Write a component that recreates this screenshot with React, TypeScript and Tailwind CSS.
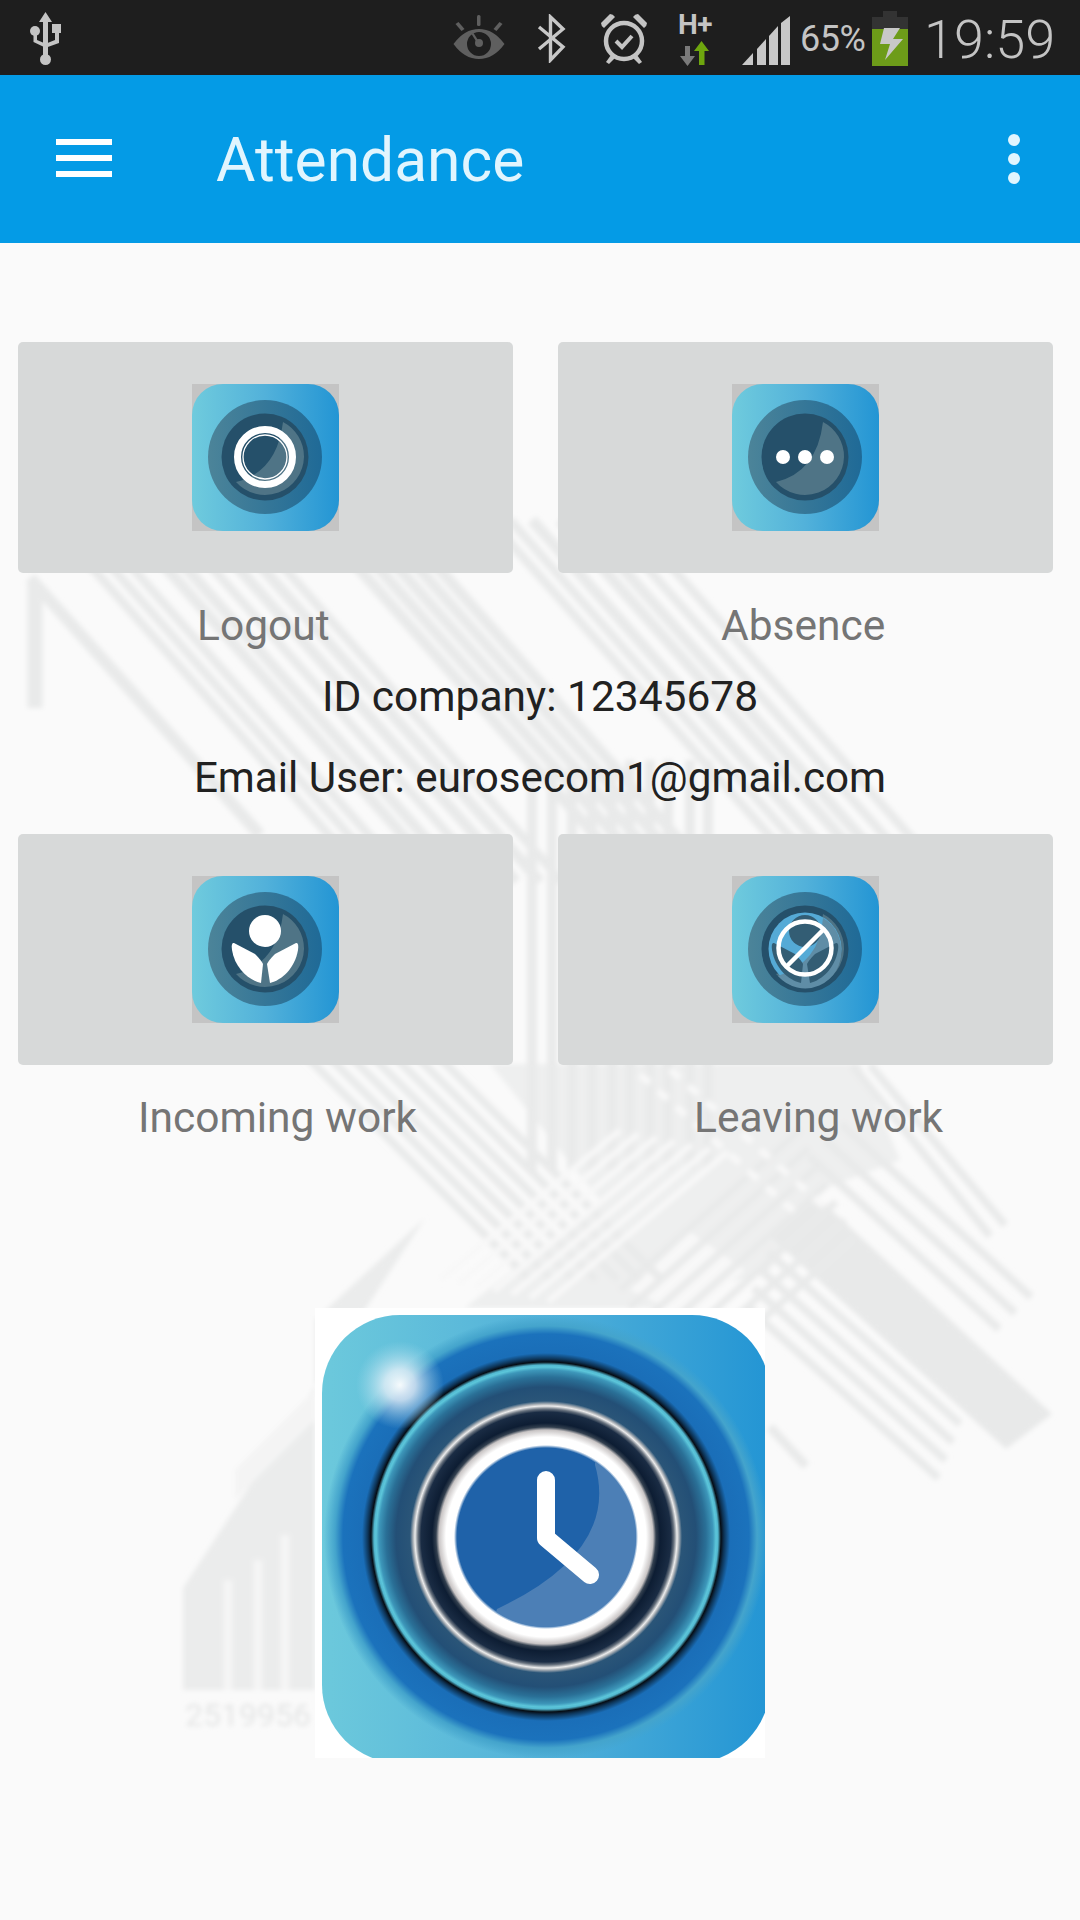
import React from "react";

const diag = (x: number, y: number, len: number, w: number, k = 1.13) => (
  <line x1={x} y1={y} x2={x + len} y2={y + len * k} strokeWidth={w} />
);

function Watermark() {
  const topLeft = [30, 50, 70, 104, 124, 150, 176, 200, 222, 296, 316, 336, 356, 376, 470, 490, 512, 540, 560, 585, 610];
  const crossA = [300, 322, 344, 366, 388, 410, 432];
  const vertical = [532, 552, 572, 592, 612, 630, 650, 668, 690, 708];
  const rise = [0, 18, 36, 54, 72, 90, 108];
  const thinA = [0, 16, 32];
  const thinB = [0, 18, 36, 54];
  const dots = [0, 1, 2, 3, 4, 5, 6, 7, 8];
  return (
    <svg className="absolute left-0 top-0 w-[1080px] h-[1920px]" viewBox="0 0 1080 1920" fill="none">
      <defs>
        <filter id="wmblur" x="-5%" y="-5%" width="110%" height="110%">
          <feGaussianBlur stdDeviation="2.6" />
        </filter>
      </defs>
      <g filter="url(#wmblur)">
        <polygon points="490,1064 860,1064 900,1160 813,1193 770,1270 650,1308 465,1308 600,1200" fill="#eeefef" />
        <polygon points="813,1193 1052,1414 1006,1449 768,1235" fill="#e8e9e9" />
        <polygon points="425,1218 315,1320 315,1690 183,1690 183,1588" fill="#ebecec" />
        <polygon points="630,1290 690,1232 745,1270 690,1318" fill="#f8f8f8" />
        <g stroke="#e9eaea">
          <path d="M35 708V585" strokeWidth="15" />
          <path d="M30 578L260 835" strokeWidth="12" />
          {topLeft.map((x) => (
            <g key={x}>{diag(x + 20, 520, 320, x % 4 === 0 ? 11 : 9)}</g>
          ))}
          {crossA.map((x) => (
            <g key={x}>{diag(x, 1050, 230, 8, 1)}</g>
          ))}
          {vertical.map((x) => (
            <line key={x} x1={x} y1={760} x2={x} y2={1170} strokeWidth="10" />
          ))}
          {rise.map((d) => (
            <line key={"r" + d} x1={800 + d * 0.5} y1={1130 + d} x2={620 + d * 0.5} y2={1290 + d} strokeWidth="7" />
          ))}
          {thinA.map((d) => (
            <line key={"t" + d} x1={841 - d} y1={1124 + d} x2={1031 - d} y2={1297 + d} strokeWidth="8" />
          ))}
          {thinB.map((d) => (
            <line key={"u" + d} x1={768 - d * 0.4} y1={1252 + d} x2={960 - d * 0.4} y2={1424 + d} strokeWidth="8" />
          ))}
          <line x1="852" y1="1065" x2="990" y2="1236" strokeWidth="8" />
          <line x1="870" y1="1065" x2="1005" y2="1225" strokeWidth="8" />
          <line x1="770" y1="1427" x2="806" y2="1466" strokeWidth="9" />
        </g>
        <g stroke="#f8f8f8" strokeWidth="6">
          {rise.map((d) => (
            <line key={"w" + d} x1={620 + d} y1={1130 + d * 0.2} x2={440 + d} y2={1280 + d * 0.2} />
          ))}
          {dots.map((i) => (
            <line key={"d" + i} x1={640 + i * 18} y1={1075 + i * 16} x2={650 + i * 18} y2={1083 + i * 16} strokeWidth="7" />
          ))}
          {dots.map((i) => (
            <line key={"e" + i} x1={670 + i * 18} y1={1070 + i * 16} x2={680 + i * 18} y2={1078 + i * 16} strokeWidth="7" />
          ))}
        </g>
        <g stroke="#f5f5f5" strokeWidth="9">
          <line x1="228" y1="1580" x2="228" y2="1690" />
          <line x1="258" y1="1560" x2="258" y2="1690" />
          <line x1="285" y1="1535" x2="285" y2="1690" />
        </g>
        <polygon points="235,1500 315,1420 315,1390 235,1470" fill="#f4f4f4" />
        <text x="185" y="1726" fill="#e4e5e5" fontSize="32" fontFamily="Roboto, sans-serif">2519956</text>
      </g>
    </svg>
  );
}

function SmallIcon({ id, children }: { id: string; children?: React.ReactNode }) {
  return (
    <svg viewBox="0 0 147 147" className="w-[147px] h-[147px] block">
      <defs>
        <linearGradient id={id + "bg"} x1="0" x2="1" y1="0" y2="0">
          <stop offset="0" stopColor="#6fcbdd" />
          <stop offset="0.5" stopColor="#52b1da" />
          <stop offset="1" stopColor="#2395d4" />
        </linearGradient>
        <linearGradient id={id + "ring"} x1="0" x2="1" y1="0" y2="0">
          <stop offset="0" stopColor="#4c8499" />
          <stop offset="1" stopColor="#1f6a97" />
        </linearGradient>
      </defs>
      <rect width="147" height="147" fill="#c4c4c4" />
      <rect width="147" height="147" rx="31" fill={`url(#${id}bg)`} />
      <circle cx="73" cy="73" r="57" fill={`url(#${id}ring)`} />
      <circle cx="73" cy="73" r="43.5" fill="#25506a" />
      <path d="M91 38Q85 88 44 98A39 39 0 0 0 112 73A39 39 0 0 0 91 38Z" fill="#4f7486" />
      {children}
    </svg>
  );
}

const Logout = () => (
  <SmallIcon id="i1">
    <circle cx="73" cy="73" r="27.5" fill="none" stroke="#fff" strokeWidth="7" />
    <circle cx="73" cy="73" r="22" fill="none" stroke="#fff" strokeWidth="1.3" />
  </SmallIcon>
);

const Absence = () => (
  <SmallIcon id="i2">
    <circle cx="51" cy="73" r="7" fill="#fff" />
    <circle cx="73" cy="73" r="7" fill="#fff" />
    <circle cx="95" cy="73" r="7" fill="#fff" />
  </SmallIcon>
);

const personParts = (fill: string) => (
  <>
    <circle cx="73" cy="55" r="16" fill={fill} />
    <path d="M42 67Q39 66 40 74C43 92 56 104 69 107L71 88Q69 84 63 78Z" fill={fill} />
    <path d="M104 67Q107 66 106 74C103 92 90 104 78 107L75 88Q77 84 83 78Z" fill={fill} />
  </>
);

const Incoming = () => <SmallIcon id="i3">{personParts("#fff")}</SmallIcon>;

const Leaving = () => (
  <SmallIcon id="i4">
    <circle cx="73" cy="73" r="36.5" fill="#55aad6" />
    <path d="M91 42Q88 86 46 100A36 36 0 0 0 109 73A36 36 0 0 0 91 42Z" fill="#5f8da6" />
    {personParts("#335d74")}
    <circle cx="73" cy="72" r="26.5" fill="none" stroke="#fff" strokeWidth="4.5" />
    <line x1="92" y1="53" x2="54" y2="91" stroke="#fff" strokeWidth="4.5" />
  </SmallIcon>
);

function BigLogo() {
  return (
    <div className="w-[450px] h-[450px] ml-[315px] mt-[165px] bg-white overflow-hidden">
      <svg viewBox="315 1308 450 450" className="w-[450px] h-[450px] block">
        <defs>
          <linearGradient id="bigbg" x1="0" x2="1" y1="0" y2="0">
            <stop offset="0" stopColor="#6cc9dc" />
            <stop offset="0.5" stopColor="#52b1d9" />
            <stop offset="1" stopColor="#2395d4" />
          </linearGradient>
          <radialGradient id="rings" gradientUnits="userSpaceOnUse" cx="546" cy="1537" r="222">
            <stop offset={89 / 222} stopColor="#1f62a9" />
            <stop offset={92 / 222} stopColor="#fff" />
            <stop offset={100 / 222} stopColor="#fff" />
            <stop offset={107 / 222} stopColor="#c9c5c5" />
            <stop offset={110 / 222} stopColor="#33404f" />
            <stop offset={114 / 222} stopColor="#0d1d33" />
            <stop offset={125 / 222} stopColor="#1a2c44" />
            <stop offset={128 / 222} stopColor="#6a7480" />
            <stop offset={131 / 222} stopColor="#ececec" />
            <stop offset={133 / 222} stopColor="#a8aeb4" />
            <stop offset={136 / 222} stopColor="#2a5578" />
            <stop offset={150 / 222} stopColor="#234f76" />
            <stop offset={160 / 222} stopColor="#2a7097" />
            <stop offset={167 / 222} stopColor="#3d97ba" />
            <stop offset={170 / 222} stopColor="#5cc6da" />
            <stop offset={172 / 222} stopColor="#52b8d0" />
            <stop offset={175 / 222} stopColor="#060c14" />
            <stop offset={178 / 222} stopColor="#0d3355" />
            <stop offset={184 / 222} stopColor="#1a6eb8" />
            <stop offset={203 / 222} stopColor="#1b72bc" />
            <stop offset={211 / 222} stopColor="#44a4cc" />
            <stop offset={222 / 222} stopColor="#44a4cc" stopOpacity="0" />
          </radialGradient>
          <radialGradient id="glare">
            <stop offset="0" stopColor="#ffffff" stopOpacity="0.95" />
            <stop offset="0.35" stopColor="#e6f0f8" stopOpacity="0.8" />
            <stop offset="1" stopColor="#a8dcec" stopOpacity="0" />
          </radialGradient>
          <clipPath id="face">
            <circle cx="546" cy="1537" r="90" />
          </clipPath>
        </defs>
        <rect x="322" y="1315" width="448" height="448" rx="78" fill="url(#bigbg)" />
        <circle cx="546" cy="1537" r="222" fill="url(#rings)" />
        <path d="M595 1465Q620 1551 497 1609L480 1660H660V1440H595Z" fill="#4c7fb6" clipPath="url(#face)" />
        <circle cx="400" cy="1385" r="44" fill="url(#glare)" />
        <path d="M546 1480V1538L590 1575" fill="none" stroke="#fff" strokeWidth="18" strokeLinecap="round" strokeLinejoin="round" />
      </svg>
    </div>
  );
}

function StatusBar() {
  return (
    <div className="relative h-[75px] bg-[#1e1e1e] shrink-0">
      <svg className="absolute left-[30px] top-[12px]" width="32" height="53" viewBox="0 0 32 53" fill="#c4c4c4">
        <path d="M15.5 0L22 10H18V45H13V10H9Z" />
        <circle cx="5" cy="19" r="5" />
        <rect x="22" y="12" width="9" height="9" />
        <path d="M3.5 22V30L14 35V31L7 28V22Z" />
        <path d="M25 20V28L15 32V36L29 31V20Z" />
        <circle cx="15.5" cy="47.5" r="5.5" />
      </svg>
      <svg className="absolute left-[453px] top-[15px]" width="52" height="44" viewBox="0 0 51 44" fill="#5f5f5f">
        <rect x="23.5" y="0" width="3.5" height="11" rx="1.5" />
        <path d="M2 9L5 7L11 14L8 16Z" />
        <path d="M49 9L46 7L40 14L43 16Z" />
        <path fillRule="evenodd" d="M0 29Q11 14 25.5 14Q40 14 51 29Q40 44 25.5 44Q11 44 0 29ZM25.5 17A12 12 0 1 0 25.5 41A12 12 0 1 0 25.5 17Z" />
        <circle cx="25.5" cy="28" r="4" />
        <path d="M18 19L20 18L25 26L23 27Z" />
      </svg>
      <svg className="absolute left-[537px] top-[14px]" width="30" height="49" viewBox="0 0 30 49" fill="none" stroke="#c8c8c8" strokeWidth="3.4">
        <path d="M2 13L26 33L13.5 46V3L26 15L2 35" />
      </svg>
      <svg className="absolute left-[600px] top-[13px]" width="48" height="51" viewBox="0 0 48 51" fill="none">
        <circle cx="24" cy="28" r="18" stroke="#c4c4c4" strokeWidth="4.5" />
        <path d="M16 28L22 34L32 23" stroke="#c4c4c4" strokeWidth="4" />
        <path d="M1 10L10 1Q13 1 15 4L4 15Q1 13 1 10Z" fill="#c4c4c4" />
        <path d="M47 10L38 1Q35 1 33 4L44 15Q47 13 47 10Z" fill="#c4c4c4" />
        <path d="M11 42L6 49L9 51L15 45Z" fill="#c4c4c4" />
        <path d="M37 42L42 49L39 51L33 45Z" fill="#c4c4c4" />
      </svg>
      <div className="absolute left-[678px] top-[10px] font-[Roboto] font-bold text-[28px] leading-[30px] tracking-[-0.5px] text-[#c4c4c4]">H+</div>
      <svg className="absolute left-[680px] top-[41px]" width="30" height="25" viewBox="0 0 30 25">
        <path d="M5 5H10V15H15L7.5 25L0 15H5Z" fill="#7a7a7a" />
        <path d="M19 24V10H14L21.5 0L29 10H24.5V24Z" fill="#6ea60e" />
      </svg>
      <svg className="absolute left-[742px] top-[16px]" width="48" height="49" viewBox="0 0 48 49" fill="#c8c8c8">
        <path d="M0 49L11 37V49Z" />
        <path d="M15 33L24 23V49H15Z" />
        <path d="M27 20L36 10V49H27Z" />
        <path d="M39 7L48 0V49H39Z" />
      </svg>
      <div className="absolute left-[800px] top-[17px] font-[Roboto] text-[36px] leading-[44px] tracking-[-0.5px] text-[#c4c4c4]">65%</div>
      <svg className="absolute left-[872px] top-[11px]" width="36" height="55" viewBox="0 0 36 55">
        <rect x="11" y="0" width="14" height="7" fill="#333" />
        <rect x="0" y="6" width="36" height="12" fill="#333" />
        <rect x="0" y="18" width="36" height="37" fill="#6d9c19" />
        <path d="M12 17H28L21 28H31L13 49L18 33H8Z" fill="#c8c8c8" />
      </svg>
      <div className="absolute left-[924px] top-[9px] font-[Roboto] font-light text-[54px] leading-[62px] text-[#c4c4c4]">19:59</div>
    </div>
  );
}

function AppBar() {
  return (
    <div className="h-[168px] bg-[#049be6] shrink-0 flex items-center">
      <div className="ml-[56px] w-[56px] flex flex-col gap-[10px] -mt-[2px]">
        <div className="h-[6px] bg-white" />
        <div className="h-[6px] bg-white" />
        <div className="h-[6px] bg-white" />
      </div>
      <div className="ml-[104px] font-[Roboto] text-[60.5px] leading-[70px] mt-[4px] text-[#e1f5fe]">Attendance</div>
      <div className="ml-auto mr-[60px] flex flex-col gap-[7px]">
        <div className="w-[12px] h-[12px] rounded-full bg-[#e1f5fe]" />
        <div className="w-[12px] h-[12px] rounded-full bg-[#e1f5fe]" />
        <div className="w-[12px] h-[12px] rounded-full bg-[#e1f5fe]" />
      </div>
    </div>
  );
}

function Card({ icon }: { icon: React.ReactNode }) {
  return <div className="h-[231px] bg-[#d7d9d9] rounded-[5px] flex items-center justify-center">{icon}</div>;
}

export default function App() {
  return (
    <div className="relative w-[1080px] h-[1920px] bg-[#fafafa] overflow-hidden font-[Roboto]">
      <Watermark />
      <div className="relative flex flex-col h-full">
        <StatusBar />
        <AppBar />
        <main className="pt-[99px]">
          <div className="grid grid-cols-[495px_495px] gap-x-[45px] px-[18px]">
            <Card icon={<Logout />} />
            <Card icon={<Absence />} />
            <div className="ml-[179px] mt-[28px] text-[42.5px] leading-[50px] text-[#757575]">Logout</div>
            <div className="ml-[163px] mt-[28px] text-[42.5px] leading-[50px] text-[#757575]">Absence</div>
          </div>
          <div className="mt-[21px] text-center text-[42.5px] leading-[50px] text-[#212121]">ID company: 12345678</div>
          <div className="mt-[31px] text-center text-[42.2px] leading-[50px] text-[#212121]">Email User: eurosecom1@gmail.com</div>
          <div className="mt-[31px] grid grid-cols-[495px_495px] gap-x-[45px] px-[18px]">
            <Card icon={<Incoming />} />
            <Card icon={<Leaving />} />
            <div className="ml-[120px] mt-[28px] text-[42.5px] leading-[50px] text-[#757575]">Incoming work</div>
            <div className="ml-[136px] mt-[28px] text-[42.5px] leading-[50px] text-[#757575]">Leaving work</div>
          </div>
          <BigLogo />
        </main>
      </div>
    </div>
  );
}
